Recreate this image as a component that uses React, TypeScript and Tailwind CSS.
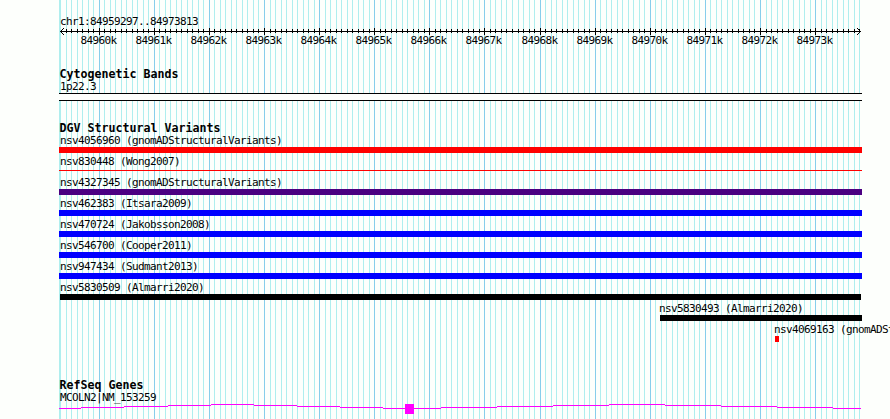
import React from 'react';

interface Variant {
  label: string;
  left: number;
  width: number;
  color: string;
  bar: string;
}

const START = 84959297;
const END = 84973813;
const PX_PER_BP = 800 / (END - START);

const toX = (bp: number) => Math.floor(60.42 + (bp - START) * PX_PER_BP);

const ticks: { bp: number; x: number; major: boolean }[] = [];
for (let bp = 84959300; bp <= END; bp += 100) {
  ticks.push({ bp, x: toX(bp), major: bp % 1000 === 0 });
}

const variants: Variant[] = [
  { label: 'nsv4056960 (gnomADStructuralVariants)', left: 59, width: 803, color: 'bg-[#ff0000]', bar: 'h-[6px]' },
  { label: 'nsv830448 (Wong2007)', left: 59, width: 803, color: 'bg-[#ff0000]', bar: 'h-px mt-[2px] mb-[3px]' },
  { label: 'nsv4327345 (gnomADStructuralVariants)', left: 59, width: 803, color: 'bg-[#4b0082]', bar: 'h-[6px]' },
  { label: 'nsv462383 (Itsara2009)', left: 59, width: 803, color: 'bg-[#0000ff]', bar: 'h-[6px]' },
  { label: 'nsv470724 (Jakobsson2008)', left: 59, width: 803, color: 'bg-[#0000ff]', bar: 'h-[6px]' },
  { label: 'nsv546700 (Cooper2011)', left: 59, width: 803, color: 'bg-[#0000ff]', bar: 'h-[6px]' },
  { label: 'nsv947434 (Sudmant2013)', left: 59, width: 803, color: 'bg-[#0000ff]', bar: 'h-[6px]' },
  { label: 'nsv5830509 (Almarri2020)', left: 60, width: 801, color: 'bg-black', bar: 'h-[6px]' },
  { label: 'nsv5830493 (Almarri2020)', left: 660, width: 202, color: 'bg-black', bar: 'h-[6px]' },
  { label: 'nsv4069163 (gnomADStructuralVariants)', left: 775, width: 4, color: 'bg-[#ff0000]', bar: 'h-[6px]' },
];

// [x start, x end, y] inside the gene track
const intron = [
  [59, 81, 4], [81, 124, 3], [124, 168, 2], [168, 211, 1], [211, 254, 0],
  [254, 297, 1], [297, 340, 2], [340, 383, 3], [383, 441, 4], [441, 497, 3],
  [497, 553, 2], [553, 609, 1], [609, 665, 0], [665, 721, 1], [721, 777, 2],
  [777, 833, 3], [833, 861, 4],
];

const Grid: React.FC = () => (
  <svg className="absolute inset-0" width="890" height="419" shapeRendering="crispEdges">
    <rect x={59} y={0} width={1} height={419} fill="#afeeee" />
    {ticks.map((t) => (
      <rect key={t.bp} x={t.x} y={0} width={1} height={419} fill={t.major ? '#87ceeb' : '#afeeee'} />
    ))}
  </svg>
);

const Ruler: React.FC = () => (
  <svg className="block" width="890" height="21" shapeRendering="crispEdges">
    <rect x={60} y={3} width={801} height={1} />
    {ticks.slice(1).map((t) => (
      <rect key={t.bp} x={t.x} y={t.major ? 0 : 1} width={1} height={t.major ? 7 : 4} />
    ))}
    <path d="M61 2h1v1h-1zM62 1h1v1h-1zM63 0h1v1h-1zM61 4h1v1h-1zM62 5h1v1h-1zM63 6h1v1h-1z" />
    <path d="M859 2h1v1h-1zM858 1h1v1h-1zM857 0h1v1h-1zM859 4h1v1h-1zM858 5h1v1h-1zM857 6h1v1h-1z" />
    {ticks.filter((t) => t.major).map((t) => (
      <text key={t.bp} x={t.x - 18.4} y={16}>
        {t.bp / 1000}k
      </text>
    ))}
  </svg>
);

const Heading: React.FC<{ children: React.ReactNode }> = ({ children }) => (
  <h2 className="h-[12px] pl-[59.5px] text-[11.63px] leading-[12px] font-bold tracking-normal">{children}</h2>
);

const App: React.FC = () => {
  return (
    <div className="relative h-[419px] w-[890px] overflow-hidden bg-[#fdfffc] font-['DejaVu_Sans_Mono','Liberation_Mono',monospace] text-[11px] leading-[14px] tracking-[-0.622px] whitespace-nowrap text-black">
      <Grid />
      <div className="relative flex flex-col pt-[15px]">
        <div className="h-[13px] pl-[60px]">chr1:84959297..84973813</div>
        <Ruler />

        <section className="pt-[19px]">
          <Heading>Cytogenetic Bands</Heading>
          <div className="h-[13px] pl-[60px]">1p22.3</div>
          <div className="ml-[59px] h-[8px] w-[803px] border-y border-black bg-[#fdfffc]" />
        </section>

        <section className="pt-[21px]">
          <Heading>DGV Structural Variants</Heading>
          {variants.map((v) => (
            <div key={v.label} className="h-[21px]">
              <div className="h-[13px]" style={{ marginLeft: Math.max(v.left, 60) - (v.left > 60 ? 1 : 0) }}>
                {v.label}
              </div>
              <div className={`${v.color} ${v.bar}`} style={{ marginLeft: v.left, width: v.width }} />
            </div>
          ))}
        </section>

        <section className="pt-[35px]">
          <Heading>RefSeq Genes</Heading>
          <div className="h-[13px] pl-[60px]">MCOLN2|NM_153259</div>
          <svg className="block" width="890" height="15" shapeRendering="crispEdges" fill="#ff00ff">
            {intron.map(([x1, x2, y]) => (
              <rect key={x1} x={x1} y={y} width={x2 - x1} height={1} />
            ))}
            <rect x={405} y={0} width={9} height={10} />
          </svg>
        </section>
      </div>
    </div>
  );
};

export default App;
